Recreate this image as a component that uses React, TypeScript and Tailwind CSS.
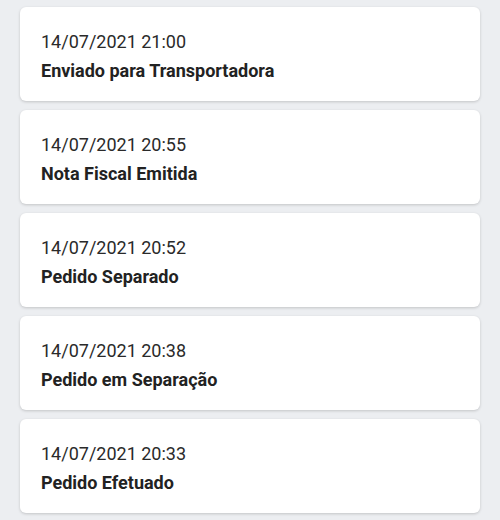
import React from "react";

const items = [
  { date: "14/07/2021 21:00", title: "Enviado para Transportadora" },
  { date: "14/07/2021 20:55", title: "Nota Fiscal Emitida" },
  { date: "14/07/2021 20:52", title: "Pedido Separado" },
  { date: "14/07/2021 20:38", title: "Pedido em Separação" },
  { date: "14/07/2021 20:33", title: "Pedido Efetuado" },
];

export default function App() {
  return (
    <div
      className="w-[500px] h-[520px] overflow-hidden bg-[#eceef1] px-[20px] pt-[7px] flex flex-col gap-[9px]"
      style={{ fontFamily: "Roboto, 'Liberation Sans', sans-serif" }}
    >
      {items.map((it) => (
        <div
          key={it.date}
          className="bg-white rounded-[6px] shadow-[0_1px_3px_rgba(0,0,0,0.18)] h-[94px] shrink-0 pl-[21px] pt-[23px]"
        >
          <div className="text-[18px] leading-[24px] text-[#2a2a2a]">{it.date}</div>
          <div className="mt-[5px] text-[18px] leading-[24px] font-bold text-[#222]">{it.title}</div>
        </div>
      ))}
    </div>
  );
}
